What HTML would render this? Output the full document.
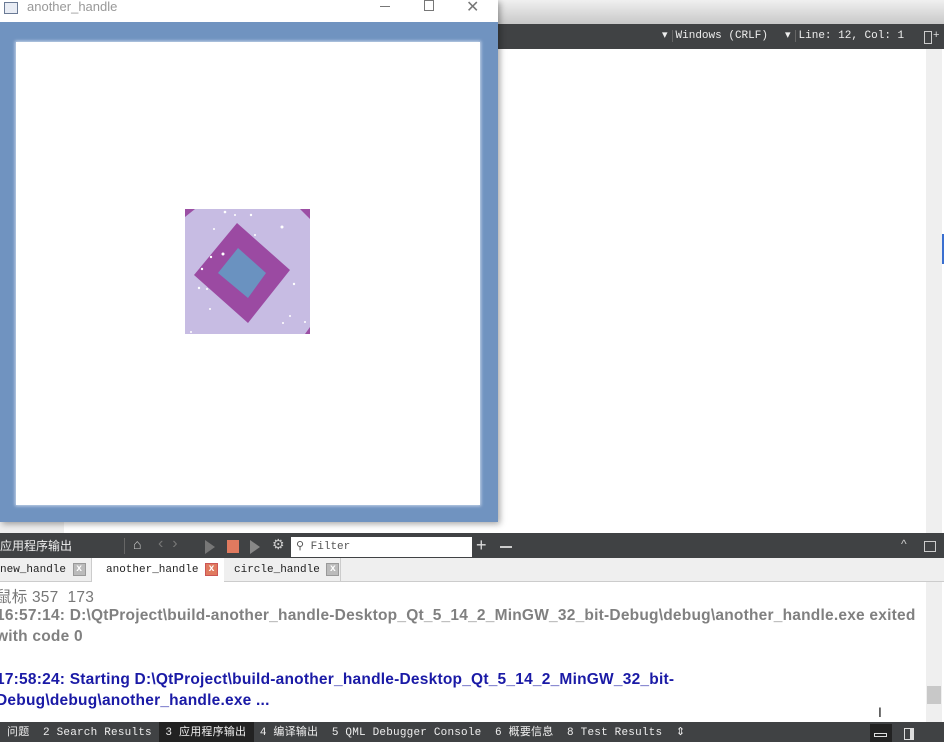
<!DOCTYPE html>
<html><head><meta charset="utf-8"><style>
*{margin:0;padding:0;box-sizing:border-box}
body{width:944px;height:742px;overflow:hidden;position:relative;background:#fff;font-family:"Liberation Sans","Noto Sans CJK SC",sans-serif}
.abs{position:absolute}
.mono{font-family:"Liberation Mono","Noto Sans CJK SC",monospace;font-size:11px}
.out{position:absolute;left:-4px;font-family:"Liberation Sans","Noto Sans CJK SC",sans-serif;font-weight:bold;font-size:15.5px;white-space:nowrap;color:#808080;letter-spacing:0.22px}
.tab{position:absolute;top:558px;height:24px;font-family:"Liberation Mono",monospace;font-size:11px;color:#222;line-height:24px}
.x{display:inline-block;width:13px;height:13px;background:#bbb;border:1px solid #999;color:#fff;font-size:10px;line-height:11px;text-align:center;vertical-align:middle;font-weight:bold}
.bb{position:absolute;top:722px;height:20px;line-height:22px;color:#eee;font-family:"Liberation Mono","Noto Sans CJK SC",monospace;font-size:11px;white-space:nowrap;letter-spacing:0.2px}
</style></head><body>
<div class="abs" style="left:498px;top:0;width:446px;height:24px;background:linear-gradient(#f0f0f0,#c8c8c8)"></div>
<div class="abs" style="left:498px;top:24px;width:446px;height:25px;background:#404244"></div>
<div class="abs mono" style="left:662px;top:24px;height:25px;line-height:25px;color:#eee;white-space:nowrap">▾<span style="border-left:1px solid #666;margin-left:4px;padding-left:3px">Windows (CRLF)</span></div>
<div class="abs mono" style="left:785px;top:24px;height:25px;line-height:25px;color:#eee;white-space:nowrap">▾<span style="border-left:1px solid #666;margin-left:4px;padding-left:3px">Line: 12, Col: 1</span></div>
<div class="abs" style="left:924px;top:31px;width:8px;height:13px;border:1px solid #ccc"></div>
<div class="abs" style="left:933px;top:29px;color:#ddd;font-size:11px">+</div>
<div class="abs" style="left:926px;top:49px;width:16px;height:484px;background:#efefef"></div>
<div class="abs" style="left:942px;top:234px;width:2px;height:30px;background:#3a6fd0"></div>
<div class="abs" style="left:0;top:522px;width:64px;height:11px;background:#efefef"></div>

<div class="abs" style="left:0;top:0;width:498px;height:522px;background:#7093c0;box-shadow:2px 2px 6px rgba(0,0,0,.35)"></div>
<div class="abs" style="left:0;top:0;width:498px;height:22px;background:#fff"></div>
<div class="abs" style="left:4px;top:2px;width:14px;height:12px;border:1px solid #6a7a95;background:#e8ecf4"></div>
<div class="abs" style="left:27px;top:0;font-size:13px;color:#999;line-height:14px">another_handle</div>
<div class="abs" style="left:380px;top:6px;width:10px;height:1px;background:#777"></div>
<div class="abs" style="left:424px;top:0;width:10px;height:11px;border:1px solid #777"></div>
<div class="abs" style="left:466px;top:-3px;font-size:16px;color:#777">✕</div>
<div class="abs" style="left:16px;top:42px;width:464px;height:463px;background:#fff;box-shadow:0 0 3px 1px #c8d6ea"></div>
<svg class="abs" style="left:185px;top:209px" width="125" height="125" viewBox="0 0 125 125">
<rect width="125" height="125" fill="#c7bce3"/>
<polygon points="0,0 10,0 0,8" fill="#9b4fa4"/><polygon points="125,0 115,0 125,10" fill="#9b4fa4"/><polygon points="125,125 120,125 125,118" fill="#9b4fa4"/>
<polygon points="52,14 105,61 63,114 9,66" fill="#9b4aa2"/>
<polygon points="53,39 81,64 63,89 33,64" fill="#6a92c0"/>
<g fill="#fff"><circle cx="40" cy="3" r="1.3"/><circle cx="50" cy="6" r="1"/><circle cx="66" cy="6" r="1.2"/><circle cx="29" cy="20" r="1"/><circle cx="38" cy="45" r="1.5"/><circle cx="26" cy="48" r="1.2"/><circle cx="17" cy="60" r="1.2"/><circle cx="14" cy="79" r="1.2"/><circle cx="22" cy="80" r="1"/><circle cx="25" cy="100" r="1"/><circle cx="97" cy="18" r="1.5"/><circle cx="109" cy="75" r="1.2"/><circle cx="105" cy="107" r="1"/><circle cx="98" cy="114" r="1"/><circle cx="120" cy="113" r="1"/><circle cx="6" cy="123" r="1"/><circle cx="70" cy="26" r="1"/></g>
</svg>

<div class="abs" style="left:0;top:533px;width:944px;height:25px;background:#404244"></div>
<div class="abs" style="left:0;top:533px;height:25px;line-height:27px;color:#eee;font-size:12px">应用程序输出</div>
<div class="abs" style="left:124px;top:538px;width:1px;height:16px;background:#666"></div>
<div class="abs" style="left:133px;top:536px;color:#ccc;font-size:14px">⌂</div>
<div class="abs" style="left:158px;top:535px;color:#777;font-size:16px">‹&nbsp;&nbsp;›</div>
<div class="abs" style="left:205px;top:540px;width:0;height:0;border-left:10px solid #777;border-top:7px solid transparent;border-bottom:7px solid transparent"></div>
<div class="abs" style="left:227px;top:540px;width:12px;height:13px;background:#e07a5f"></div>
<div class="abs" style="left:250px;top:540px;width:0;height:0;border-left:10px solid #888;border-top:7px solid transparent;border-bottom:7px solid transparent"></div>
<div class="abs" style="left:272px;top:536px;color:#ccc;font-size:14px">⚙</div>
<div class="abs" style="left:291px;top:537px;width:181px;height:20px;background:#fff"></div>
<div class="abs mono" style="left:296px;top:537px;line-height:20px;color:#555">⚲ Filter</div>
<div class="abs" style="left:476px;top:533px;color:#ddd;font-size:18px;line-height:25px">+</div>
<div class="abs" style="left:500px;top:546px;width:12px;height:2px;background:#ccc"></div>
<div class="abs" style="left:901px;top:537px;color:#ccc;font-size:12px">^</div>
<div class="abs" style="left:924px;top:541px;width:12px;height:11px;border:1px solid #ccc"></div>

<div class="abs" style="left:0;top:558px;width:944px;height:24px;background:#efefef;border-bottom:1px solid #ccc"></div>
<div class="tab" style="left:0;width:92px;border-right:1px solid #ccc">new_handle <span class="x">x</span></div>
<div class="tab" style="left:92px;width:132px;background:#fff;padding-left:14px;height:25px">another_handle <span class="x" style="background:#e07a5f;border-color:#c55">x</span></div>
<div class="tab" style="left:224px;width:117px;padding-left:10px;border-right:1px solid #ccc">circle_handle <span class="x">x</span></div>

<div class="out" style="top:585px;font-weight:normal;color:#777">鼠标 357&nbsp;&nbsp;173</div>
<div class="out" style="top:607px">16:57:14: D:\QtProject\build-another_handle-Desktop_Qt_5_14_2_MinGW_32_bit-Debug\debug\another_handle.exe exited</div>
<div class="out" style="top:628px">with code 0</div>
<div class="out" style="top:671px;color:#1a1aa6">17:58:24: Starting D:\QtProject\build-another_handle-Desktop_Qt_5_14_2_MinGW_32_bit-</div>
<div class="out" style="top:692px;color:#1a1aa6">Debug\debug\another_handle.exe ...</div>
<div class="abs" style="left:926px;top:582px;width:16px;height:140px;background:#efefef"></div>
<div class="abs" style="left:927px;top:686px;width:14px;height:18px;background:#c8c8c8"></div>
<div class="abs" style="left:878px;top:704px;font-size:14px;color:#222">I</div>

<div class="abs" style="left:0;top:722px;width:944px;height:20px;background:#404244"></div>
<div class="abs" style="left:159px;top:722px;width:95px;height:20px;background:#222"></div>
<div class="bb" style="left:7px">问题&nbsp;&nbsp;2 Search Results&nbsp;&nbsp;3 应用程序输出&nbsp;&nbsp;4 编译输出&nbsp;&nbsp;5 QML Debugger Console&nbsp;&nbsp;6 概要信息&nbsp;&nbsp;8 Test Results&nbsp;&nbsp;⇕</div>
<div class="abs" style="left:870px;top:724px;width:22px;height:18px;background:#222"></div>
<div class="abs" style="left:874px;top:733px;width:13px;height:4px;border:1px solid #ddd"></div>
<div class="abs" style="left:904px;top:728px;width:10px;height:12px;border:1px solid #ddd;border-right:4px solid #ddd"></div>
</body></html>
